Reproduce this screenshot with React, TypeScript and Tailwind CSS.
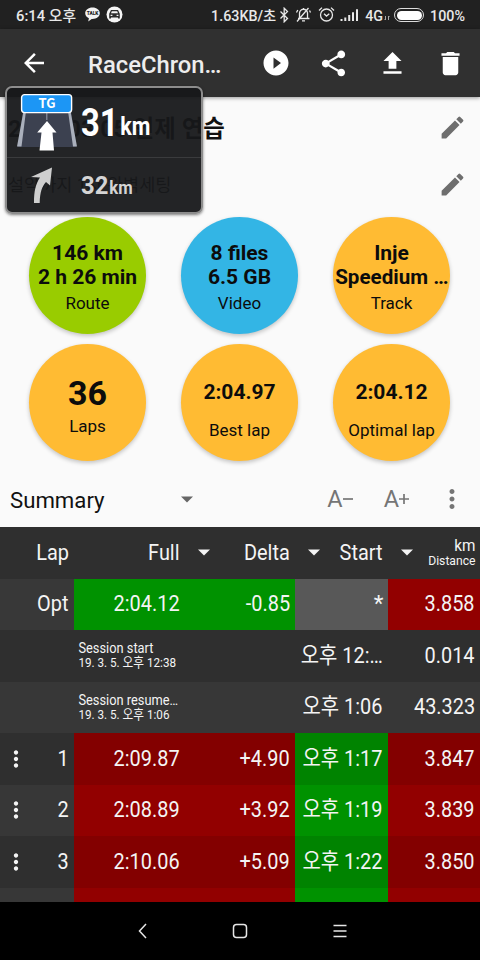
import clsx from "clsx"
import type { ReactNode } from "react"
import {
  MdArrowBack,
  MdDelete,
  MdEdit,
  MdFileUpload,
  MdMoreVert,
  MdPlayCircleFilled,
  MdShare,
} from "react-icons/md"

type Tone = "good" | "bad" | "none"

type LapRow = {
  lap: string
  full: string
  delta: string
  start: string
  distance: string
}

const laps: LapRow[] = [
  { lap: "1", full: "2:09.87", delta: "+4.90", start: "오후 1:17", distance: "3.847" },
  { lap: "2", full: "2:08.89", delta: "+3.92", start: "오후 1:19", distance: "3.839" },
  { lap: "3", full: "2:10.06", delta: "+5.09", start: "오후 1:22", distance: "3.850" },
]

const sessions = [
  { title: "Session start", date: "19. 3. 5. 오후 12:38", start: "오후 12:…", distance: "0.014" },
  { title: "Session resume…", date: "19. 3. 5. 오후 1:06", start: "오후 1:06", distance: "43.323" },
]

const rowGrid =
  "grid h-[51.5px] shrink-0 grid-cols-[73.5px_111px_110.5px_92.5px_92.5px] text-[22.5px] leading-[26px]"

function StatusBar() {
  return (
    <div className="flex h-[29px] shrink-0 items-center bg-[#212121] pl-4 pr-[15px] text-[14.3px] font-medium leading-[18px] text-[#e8e8e8]">
      <span className="mt-[2px] w-[68px] whitespace-nowrap text-[14.8px]">6:14 오후</span>
      <svg width="17" height="17" viewBox="0 0 17 17" className="shrink-0">
        <path
          d="M8.5 1.5c4.2 0 7.3 2.5 7.3 5.7s-3.1 5.7-7.3 5.7h-.8l-3.5 2.6.7-3.3C2.600 11.200 1.200 9.400 1.200 7.200c0-3.200 3.100-5.700 7.300-5.700z"
          fill="#f2f2f2"
        />
        <text x="8.5" y="9" fontSize="4.8" fontWeight="900" textAnchor="middle" fill="#212121">
          TALK
        </text>
      </svg>
      <svg width="17" height="17" viewBox="0 0 17 17" className="ml-[5px] shrink-0">
        <circle cx="8.5" cy="8.5" r="8" fill="#f5f5f5" />
        <path d="M5 4h7l1.800 3.800v4.700h-1.800v-1.100H5v1.100H3.200V7.800z" fill="#2b2b2b" />
        <path d="M5.800 5.300h5.400l.8 2H5zM4.600 8.800h1.800v1.100H4.600zM10.600 8.800h1.800v1.100h-1.800z" fill="#f5f5f5" />
      </svg>
      <span className="ml-auto mt-[2px] whitespace-nowrap">1.63KB/초</span>
      <svg width="11" height="16" viewBox="0 0 11 16" fill="none" stroke="currentColor" strokeWidth="1.3" className="ml-[3px]">
        <path d="M1.500 4.500l7 7L5.200 14.800V1.200l3.300 3.300-7 7" />
      </svg>
      <svg width="17" height="17" viewBox="0 0 17 17" fill="none" stroke="currentColor" strokeWidth="1.3" className="ml-[5px]">
        <path d="M3 12.500h11.500M4.500 12V7.500a4 4 0 018-.5v5M8.500 3.400V2M7 14.800h3M2 15.500L13.500 2M1.500 6.500l1.300-2.500M15.500 6.500l-1-2" />
      </svg>
      <svg width="17" height="17" viewBox="0 0 17 17" fill="none" stroke="currentColor" strokeWidth="1.3" className="ml-[6px]">
        <circle cx="8.5" cy="9" r="6" />
        <path d="M6 7.800l2.500 2.300 2.800-2.300M1 4.500L4 1.600M16 4.500l-3-2.900" />
      </svg>
      <svg width="19" height="14" viewBox="0 0 19 14" fill="currentColor" className="ml-[5px]">
        <path d="M.5 11h2v2h-2zM4.300 9.500h2V13h-2zM8.200 7h2v6h-2zM12 4.300h2V13h-2zM16 1.300h2V13h-2z" />
      </svg>
      <span className="ml-[6px] mt-[2px]">4G</span>
      <svg width="6" height="6" viewBox="0 0 6 6" fill="none" stroke="#aaa" className="ml-px mt-[6px]">
        <path d="M1.500 1v4M4.500 1v4M.5 4l1 1M5.500 2l-1-1" />
      </svg>
      <span className="ml-[4px] mt-px flex h-[14px] w-[30px] shrink-0 rounded-full border-[1.5px] border-[#ddd] p-[1.5px]">
        <span className="flex-1 rounded-full bg-white" />
      </span>
      <span className="ml-[6px] mt-[2px]">100%</span>
    </div>
  )
}

function AppBar() {
  return (
    <div className="z-10 flex h-[68px] shrink-0 items-center bg-[#303030] pl-[19px] pr-[14px] text-white shadow-[0_1px_4px_rgba(0,0,0,0.4)]">
      <MdArrowBack size={30} />
      <span className="ml-[39px] mt-[4px] w-[158px] whitespace-nowrap text-[23.8px] font-medium leading-7 text-[#ededed]">
        RaceChron…
      </span>
      <div className="ml-auto flex items-center gap-[27.5px]">
        <MdPlayCircleFilled size={30} />
        <MdShare size={31} />
        <MdFileUpload size={31} />
        <MdDelete size={31} />
      </div>
    </div>
  )
}

function Bubble({ className, children }: { className: string; children: ReactNode }) {
  return (
    <div
      className={clsx(
        "flex size-[117px] flex-col items-center whitespace-nowrap rounded-full text-[21px] font-bold leading-[24.5px] text-[#0c0c0c] shadow-[0_2px_4px_rgba(0,0,0,0.22)]",
        className
      )}
    >
      {children}
    </div>
  )
}

function BubbleLabel({ className, children }: { className: string; children: ReactNode }) {
  return <span className={clsx("text-[17px] font-normal leading-[22px]", className)}>{children}</span>
}

function Bubbles() {
  return (
    <div className="grid grid-cols-[117px_117px_117px] gap-x-[35px] gap-y-[10px] pl-[29px]">
      <Bubble className="bg-[#99cc00] pt-[23.5px]">
        <span>146 km</span>
        <span>2 h 26 min</span>
        <BubbleLabel className="mt-[2px]">Route</BubbleLabel>
      </Bubble>
      <Bubble className="bg-[#33b5e5] pt-[23.5px]">
        <span>8 files</span>
        <span>6.5 GB</span>
        <BubbleLabel className="mt-[2px]">Video</BubbleLabel>
      </Bubble>
      <Bubble className="bg-[#ffbb33] pt-[23.5px]">
        <span>Inje</span>
        <span className="scale-x-[0.98]">Speedium …</span>
        <BubbleLabel className="mt-[2px]">Track</BubbleLabel>
      </Bubble>
      <Bubble className="bg-[#ffbb33] pt-[30px]">
        <span className="text-[34px] leading-[38px]">36</span>
        <BubbleLabel className="mt-[3px]">Laps</BubbleLabel>
      </Bubble>
      <Bubble className="bg-[#ffbb33] pt-[36px]">
        <span>2:04.97</span>
        <BubbleLabel className="mt-[14px]">Best lap</BubbleLabel>
      </Bubble>
      <Bubble className="bg-[#ffbb33] pt-[36px]">
        <span>2:04.12</span>
        <BubbleLabel className="mt-[14px]">Optimal lap</BubbleLabel>
      </Bubble>
    </div>
  )
}

function Caret({ className }: { className?: string }) {
  return (
    <svg width="12" height="7" viewBox="0 0 12 7" fill="currentColor" className={className}>
      <path d="M0 .5h12L6 6.500z" />
    </svg>
  )
}

function Toolbar() {
  return (
    <div className="mt-[10px] flex h-[56px] items-center pl-[10px] pr-[13px] text-[22.2px] text-[#111]">
      <span className="mt-px w-[171px] leading-[26px]">Summary</span>
      <Caret className="text-[#666]" />
      <div className="ml-auto flex items-center text-[#757575]">
        <span className="text-[23.5px] leading-7">A</span>
        <svg width="10" height="10" viewBox="0 0 10 10" stroke="currentColor" strokeWidth="1.7">
          <path d="M0 5h10" />
        </svg>
        <span className="ml-[31px] text-[23.5px] leading-7">A</span>
        <svg width="10" height="10" viewBox="0 0 10 10" stroke="currentColor" strokeWidth="1.7">
          <path d="M0 5h10M5 0v10" />
        </svg>
        <MdMoreVert size={30} className="ml-[28px]" />
      </div>
    </div>
  )
}

function Cell({ tone = "none", dim, children }: { tone?: Tone; dim?: boolean; children?: ReactNode }) {
  return (
    <div
      className={clsx(
        "flex items-center justify-end whitespace-nowrap pb-[2px] pr-[5px]",
        tone === "good" && (dim ? "bg-[#008300]" : "bg-[#009200]"),
        tone === "bad" && (dim ? "bg-[#830000]" : "bg-[#920000]")
      )}
    >
      <span className="origin-right scale-x-[0.885]">{children}</span>
    </div>
  )
}

function HeadCell({ children, sortable }: { children: ReactNode; sortable?: boolean }) {
  return (
    <div className="flex items-center pl-[13px] pr-[5px]">
      {sortable && <Caret className="shrink-0" />}
      <span className="-mt-[2px] ml-auto origin-right scale-x-[0.885]">{children}</span>
    </div>
  )
}

function LapTable() {
  return (
    <div className="flex min-h-0 flex-1 flex-col overflow-hidden bg-[#2f2f2f] text-[#f4f4f4]">
      <div className={rowGrid}>
        <HeadCell>Lap</HeadCell>
        <HeadCell>Full</HeadCell>
        <HeadCell sortable>Delta</HeadCell>
        <HeadCell sortable>Start</HeadCell>
        <div className="flex items-center pl-[13px] pr-[5px]">
          <Caret className="shrink-0" />
          <div className="-ml-3 -mt-[2px] flex flex-1 origin-right scale-x-[0.9] flex-col items-end">
            <span className="text-[17px] leading-[16px]">km</span>
            <span className="text-[13.5px] leading-[14px]">Distance</span>
          </div>
        </div>
      </div>
      <div className={clsx(rowGrid, "bg-[#383838]")}>
        <Cell>Opt</Cell>
        <Cell tone="good">2:04.12</Cell>
        <Cell tone="good">-0.85</Cell>
        <div className="flex items-center justify-end bg-[#585858] pb-[2px] pr-[4px]">*</div>
        <Cell tone="bad">3.858</Cell>
      </div>
      {sessions.map((session, i) => (
        <div key={session.title} className={clsx(rowGrid, i % 2 === 1 && "bg-[#373737]")}>
          <div className="col-span-2 col-start-2 flex origin-left scale-x-[0.885] flex-col justify-center whitespace-nowrap pl-[5px]">
            <span className="text-[14.5px] leading-[15px]">{session.title}</span>
            <span className="text-[13.2px] leading-[14px]">{session.date}</span>
          </div>
          <Cell>{session.start}</Cell>
          <Cell>{session.distance}</Cell>
        </div>
      ))}
      {laps.map((row, i) => {
        const dim = i % 2 === 0
        return (
          <div key={row.lap} className={clsx(rowGrid, !dim && "bg-[#373737]")}>
            <div className="flex items-center justify-between pl-[3px] pr-[5px]">
              <MdMoreVert size={26} />
              <span className="-mt-[2px] origin-right scale-x-[0.885]">{row.lap}</span>
            </div>
            <Cell tone="bad" dim={dim}>
              {row.full}
            </Cell>
            <Cell tone="bad" dim={dim}>
              {row.delta}
            </Cell>
            <Cell tone="good" dim={dim}>
              {row.start}
            </Cell>
            <Cell tone="bad" dim={dim}>
              {row.distance}
            </Cell>
          </div>
        )
      })}
      {/* next lap, only its top edge is scrolled into view */}
      <div className={clsx(rowGrid, "bg-[#373737]")}>
        <Cell />
        <Cell tone="bad" />
        <Cell tone="bad" />
        <Cell tone="good" />
        <Cell tone="bad" />
      </div>
    </div>
  )
}

// Floating turn-by-turn widget from the navigation app
function NaviWidget() {
  return (
    <div className="absolute left-[5px] top-[86px] z-20 flex h-[128px] w-[198px] flex-col rounded-[7px] border-2 border-[#8d8d8d] bg-[#17181a]/95 shadow-[0_1px_3px_rgba(0,0,0,0.5)]">
      <div className="flex h-[70px] items-center border-b border-[#3a3b3d] pl-[10px]">
        <svg width="60" height="60" viewBox="0 0 60 60" className="shrink-0">
          <path d="M6 18h48l5 36H1z" fill="#3c4150" />
          <path d="M6.500 18h2.500L4.500 53.500H0zM51 18h2.500L60 53.500h-4z" fill="#aab0bc" />
          <path d="M29 20h1.500v7H29z" fill="#7a8090" />
          <rect x="4.6" y="1.6" width="50" height="18" rx="3" fill="#1c96f5" stroke="#fff" strokeWidth="1.4" />
          <text x="30" y="15.3" fontSize="13" fontWeight="700" textAnchor="middle" fill="#fff" className="font-['Noto_Sans_CJK_KR',sans-serif]">
            TG
          </text>
          <path d="M30 28l9.500 11.500h-4L37 57.500H22.500l2-18h-4.300z" fill="#fff" />
        </svg>
        <div className="ml-[4px] flex origin-left scale-x-[0.86] items-center font-bold text-white">
          <span className="text-[38px] leading-10">31</span>
          <span className="ml-[2px] mt-[9px] text-[25px] leading-7">km</span>
        </div>
      </div>
      <div className="flex flex-1 items-center pl-[22px] text-[#d4d4d4]">
        <svg width="26" height="40" viewBox="0 0 26 40" fill="#cfcfcf" className="shrink-0">
          <path d="M23 2.500L21 20.500l-4-3.500c-4 4.500-6 10-6.300 21H5C5 26 6.500 19.500 11 12.500L2 12z" />
        </svg>
        <div className="ml-[26px] flex origin-left scale-x-[0.9] items-center font-bold">
          <span className="text-[26.5px] leading-8">32</span>
          <span className="ml-px mt-[5px] text-[18.5px] leading-6">km</span>
        </div>
      </div>
    </div>
  )
}

function NavBar() {
  return (
    <div className="flex h-[58px] shrink-0 items-center justify-center gap-[84px] bg-black text-[#e6e6e6]">
      <svg width="16" height="16" viewBox="0 0 16 16" fill="none" stroke="currentColor" strokeWidth="1.5">
        <path d="M14 1L7.500 8l6.500 7" />
      </svg>
      <svg width="16" height="16" viewBox="0 0 16 16" fill="none" stroke="currentColor" strokeWidth="1.5">
        <rect x="1.5" y="1.5" width="13" height="13" rx="3" />
      </svg>
      <svg width="16" height="16" viewBox="0 0 16 16" stroke="currentColor" strokeWidth="1.5">
        <path d="M1.500 2.500h13M1.500 8h13M1.500 13.500h13" />
      </svg>
    </div>
  )
}

export default function App() {
  return (
    <div className="relative flex h-[960px] w-[480px] flex-col overflow-hidden bg-[#fafafa] font-['Roboto','Noto_Sans_CJK_KR',sans-serif]">
      <StatusBar />
      <AppBar />
      <div className="flex h-[430px] shrink-0 flex-col">
        <div className="flex h-[60px] items-center justify-between pl-[8px] pr-[13px]">
          <span className="mt-[3px] whitespace-nowrap text-[23.4px] font-bold leading-7 text-[#111]">2019 03 05 인제 연습</span>
          <MdEdit size={29} className="text-[#6e6e6e]" />
        </div>
        <div className="flex h-[54px] items-center justify-between pl-[8px] pr-[13px]">
          <span className="mt-[2px] text-[17.5px] leading-6 text-[#222]">설악까지 1차 완벽세팅</span>
          <MdEdit size={29} className="text-[#6e6e6e]" />
        </div>
        <div className="pt-[6px]">
          <Bubbles />
        </div>
        <Toolbar />
      </div>
      <LapTable />
      <NavBar />
      <NaviWidget />
    </div>
  )
}
